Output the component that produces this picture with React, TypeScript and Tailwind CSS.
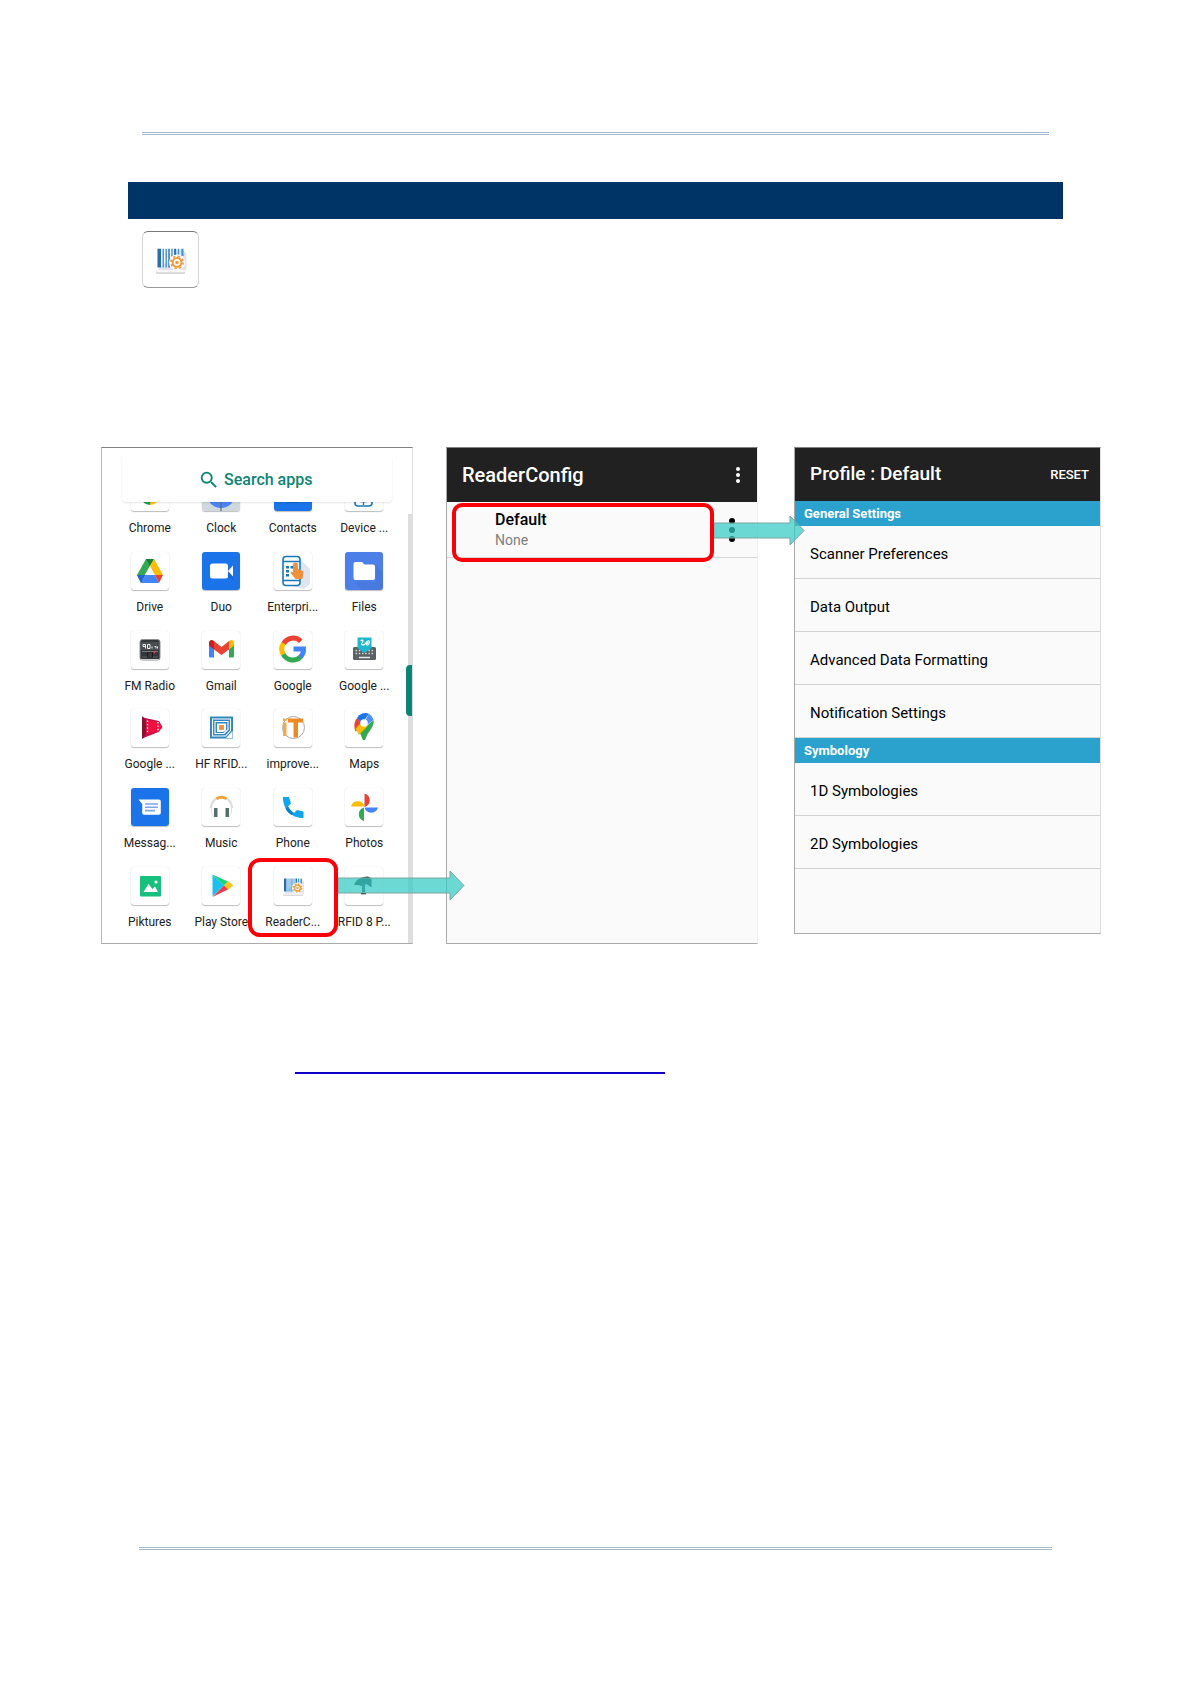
import type { ReactNode } from "react";
import { MdSearch } from "react-icons/md";

const BLUE = "#1a73e8";

function Barcode() {
  return (
    <g transform="translate(0 1.5)">
      <path d="M10 25 L30 25 L30 13 L26 10 Z" fill="#dfe3f1" />
      <path d="M9 26h20v1.500H9z" fill="#dcdcdf" />
      <path d="M10 10h2.500v13H10zM17.500 10h1v13h-1zM21.500 10h1.500v6h-1.500z" fill="#2a6eb0" />
      <path d="M13.500 10h1v13h-1zM15.500 10h1v13h-1zM19.500 10h1v13h-1zM24 10h1v4h-1zM26.500 10h1.500v5h-1.500z" fill="#3a9ad0" />
      <circle cx="23.500" cy="19.500" r="5.500" fill="#fff" />
      <circle cx="23.500" cy="19.500" r="3" fill="none" stroke="#f19a3e" strokeWidth="1.400" />
      <circle cx="23.500" cy="19.500" r="4.200" fill="none" stroke="#f19a3e" strokeWidth="1.200" strokeDasharray="1.650 1.650" />
      <circle cx="23.500" cy="19.500" r="1.200" fill="#f19a3e" />
    </g>
  );
}

const icons: Record<string, ReactNode> = {
  chrome: (
    <>
      <path d="M9 24a12 12 0 0 0 10 8l3-7z" fill="#1e9e50" />
      <path d="M19 32a12 12 0 0 0 10-8l-9 1z" fill="#fbc116" />
    </>
  ),
  clock: (
    <>
      <rect width="38" height="38" fill="#cfd8dc" />
      <circle cx="19" cy="21" r="14" fill="#4d84f3" />
      <path d="M19 21v17" stroke="#546e7a" strokeWidth="1.2" />
    </>
  ),
  contacts: (
    <>
      <rect width="38" height="38" fill={BLUE} />
      <path d="M13 25h12v5H13z" fill="#1765cc" />
    </>
  ),
  device: (
    <>
      <rect x="10" y="8" width="17" height="25" rx="3" fill="none" stroke="#1b78b8" strokeWidth="1.6" />
      <path d="M18.500 26v6M15 28.500h7" stroke="#1b78b8" strokeWidth="1.4" />
    </>
  ),
  drive: (
    <>
      <path d="M15 7h8L14 22.5 10 31 6 23z" fill="#34a853" />
      <path d="M15 7h8l-4 7z" fill="#188038" />
      <path d="M23 7l9 16h-8l-5-9z" fill="#fbbc04" />
      <path d="M14.5 23H24l4 8H10z" fill="#4285f4" />
      <path d="M6 23h8.5L10 31z" fill="#2564d3" />
      <path d="M24 23h8l-4 8z" fill="#ea4335" />
    </>
  ),
  duo: (
    <>
      <rect width="38" height="38" fill={BLUE} />
      <path d="M9 15h18l4-3v14l-4-3H9z" fill="#1558c0" opacity=".45" transform="translate(0 2)" />
      <rect x="8" y="11.500" width="18" height="15" rx="2.500" fill="#fff" />
      <path d="M26 19l5-5.500v11z" fill="#fff" />
    </>
  ),
  enterprise: (
    <>
      <path d="M26 7l10 10v15l-6 5-16-4z" fill="#e0e4ef" />
      <rect x="9" y="4.500" width="17" height="29" rx="3" fill="#fff" stroke="#1b78b8" strokeWidth="1.600" />
      <path d="M9 9.500h17M9 28.500h17" stroke="#1b78b8" strokeWidth="1.300" />
      <path d="M12 14h3v2.500h-3zM16.500 14h3v2.500h-3zM12 18h3v2.500h-3zM12 22h3v2.500h-3z" fill="#1b78b8" />
      <path d="M19 13a2.500 2.500 0 0 1 5 0v4l4 1.500a2 2 0 0 1 1.500 2l-1 6.500h-7l-5-6c0-1.500 1.500-1.500 2.500-.5z" fill="#f2913d" />
    </>
  ),
  files: (
    <>
      <rect width="38" height="38" fill="#4c80e8" />
      <path d="M9 30l22 0V14l7 7v17H17z" fill="#4172d4" opacity=".5" />
      <path d="M8.500 12a2 2 0 0 1 2-2H17l2.500 2.500H28a2 2 0 0 1 2 2V26a2 2 0 0 1-2 2H10.500a2 2 0 0 1-2-2z" fill="#fff" />
    </>
  ),
  radio: (
    <>
      <rect x="9" y="8.500" width="20" height="20.500" rx="2.500" fill="#34373a" stroke="#8d8f91" strokeWidth="1" />
      <rect x="10" y="11" width="18" height="8" fill="#4a4d50" />
      <path d="M14.500 17.500v-4h-2.500v2h2.500M16.500 13.500H19v4h-2.500zM21 17.500v-2M23.500 15.500h1.500v2M26.500 17.500v-2" fill="none" stroke="#eee" strokeWidth="1" />
      <path d="M11 20.500h16" stroke="#8a8a8a" strokeWidth=".8" />
      <path d="M11 26h16" stroke="#666" strokeWidth=".8" />
      <rect x="16" y="21.500" width="6" height="5" fill="#191a1b" />
      <path d="M18 22v4M20 22v4" stroke="#777" strokeWidth=".7" />
      <circle cx="23.500" cy="21.500" r="1" fill="#e53950" />
      <path d="M10 28.500h18" stroke="#ccc" />
    </>
  ),
  gmail: (
    <g transform="translate(0 -1.5)">
      <path d="M7 12v14.500a1.500 1.500 0 0 0 1.500 1.500H12V16z" fill="#4285f4" />
      <path d="M32 12v14.500a1.500 1.500 0 0 1-1.500 1.500H27V16z" fill="#34a853" />
      <path d="M27 11.500c2-1.700 5-1 5 1.500v3L27 20z" fill="#fbbc04" />
      <path d="M7 13c0-2.500 3-3.200 5-1.500V20l-5-4z" fill="#c5221f" />
      <path d="M12 11.500l7.500 6 7.500-6V20l-7.500 5.500L12 20z" fill="#ea4335" />
    </g>
  ),
  google: (
    <g fill="none" strokeWidth="5">
      <path d="M26.800 10.200A11 11 0 0 0 9.500 12.800" stroke="#ea4335" />
      <path d="M9.500 12.200A11 11 0 0 0 9.500 23.800" stroke="#fbbc05" />
      <path d="M9.300 23.400A11 11 0 0 0 26.500 26" stroke="#34a853" />
      <path d="M26.200 26.200A10.500 10.500 0 0 0 29.500 18H19.500" stroke="#4285f4" />
    </g>
  ),
  keyboard: (
    <>
      <rect x="8" y="16" width="23" height="13" rx="1.500" fill="#5b6063" />
      <path d="M10.500 19.500h18M10.500 22.500h18" stroke="#cfd3d5" strokeWidth="1.600" strokeDasharray="1.600 1.600" />
      <path d="M14 26.500h11" stroke="#e6e8e9" strokeWidth="1.500" />
      <path d="M12.500 6.500h14v10.500l-7 5-7-5z" fill="#1fb6cf" />
      <path d="M15.500 9.500c3-1 3 1 1.500 2.500s1 3 3 1 2.500-4 4-3-.5 4.500-2 4 .5-3 1.500-2" fill="none" stroke="#fff" strokeWidth="1.200" />
    </>
  ),
  movies: (
    <>
      <path d="M11 7.500q1 0 2 1.200L28 12l3.500 6-4 5-14.500 5.800q-1 1-2 1z" fill="#c2134a" />
      <path d="M14.500 11l13 1.500 3.500 6-3.500 4-13 2.500z" fill="#f0103f" />
      <path d="M11 7.500q4.500 2 4.500 11T11 29.800z" fill="#8a1233" />
      <path d="M16.500 11.500v13M27 13v9.500" stroke="#fff" strokeWidth="1.400" strokeDasharray="1.400 2" />
    </>
  ),
  hfrfid: (
    <g transform="translate(0 1.5)">
      <rect x="8" y="6" width="23" height="22" fill="#3386bd" />
      <g fill="none" stroke="#fff" strokeWidth="1.100">
        <path d="M10.500 8.500h18V20l-5 5.500h-13z" />
        <path d="M13 11h13v8l-4 4h-9z" />
        <path d="M15.500 13.500h8v5l-2.500 2.500h-5.500z" />
      </g>
      <rect x="15.500" y="13.500" width="8" height="7.500" fill="#fff" />
      <path d="M24 27.500l6.500-7v7z" fill="#fff" />
      <rect x="17" y="14.500" width="5" height="5" rx="1" fill="#f2913d" />
    </g>
  ),
  improve: (
    <g transform="translate(0 1.5)">
      <circle cx="19.500" cy="17" r="11" fill="#fff" stroke="#9aa0a6" strokeWidth=".900" />
      <path d="M9 12h3.500v13.500H9zM9 8h3.500v2.500H9z" fill="#f5a94e" />
      <path d="M14 8h15v4h-5v15h-4.500V12H14z" fill="#ef8a22" />
    </g>
  ),
  maps: (
    <g transform="translate(0 1.5)">
      <path d="M12 7.500L19 14l-8.500 7C9 17 8.500 12 12 7.500z" fill="#ea4335" />
      <path d="M12 7.500a9.500 9.500 0 0 1 12-4.300L17 13z" fill="#1a73e8" />
      <path d="M24 3.200a9.500 9.500 0 0 1 4.500 6L15 20z" fill="#4d90f5" />
      <path d="M28.500 9.200c1 6-3 10-6 14.500-1.500 2.300-1.500 6-3.500 6s-2-3.700-3.500-6l-1-1.500z" fill="#34a853" />
      <path d="M10.500 18l6-6 6.500 3-9 9.500z" fill="#fbbc04" />
      <circle cx="19" cy="12.500" r="3.800" fill="#fff" />
    </g>
  ),
  messages: (
    <>
      <rect width="38" height="38" fill={BLUE} />
      <path d="M7.500 11.500H28a1.800 1.800 0 0 1 1.800 1.800V25a1.800 1.800 0 0 1-1.800 1.800H13A1.800 1.800 0 0 1 11.200 25V16z" fill="#fff" />
      <path d="M14 16h13M14 19.300h13M14 22.600h10" stroke="#7ba7ee" strokeWidth="1.600" />
    </>
  ),
  music: (
    <>
      <path d="M9 20a10 10.500 0 0 1 21 0" fill="none" stroke="#dcdcdc" strokeWidth="2" />
      <path d="M14.500 10.800a10 10 0 0 1 10 0" fill="none" stroke="#f2a43a" strokeWidth="3" />
      <path d="M12 20h3.500v9H12zM23.500 20H27v9h-3.500z" fill="#546e6a" />
      <path d="M9.500 20c-.5 4 .5 7 2.500 9M29.500 20c.5 4-.5 7-2.500 9" fill="none" stroke="#e0e0e0" />
    </>
  ),
  phone: (
    <>
      <path d="M9 9h6l2 6.500-3 3c1.500 3 3.500 5 6 6.500l3-3 6.500 1.500V30C18 30.500 8.500 21 9 9z" fill="#12a4ee" />
      <path d="M14 18.500c1.500 3 3.500 5 6 6.500l-2.500 2c-3-2-5-4-6-6.500z" fill="#0b7fd0" />
    </>
  ),
  photos: (
    <>
      <path d="M19.500 5.500a7 7 0 0 1 0 13.500z" fill="#ea4335" />
      <path d="M33 19.500a7 7 0 0 1-13.500 0z" fill="#4285f4" />
      <path d="M19 33a7 7 0 0 1 0-13.500z" fill="#34a853" />
      <path d="M6 18.500a7 7 0 0 1 13.500 0z" fill="#fbbc04" />
    </>
  ),
  piktures: (
    <>
      <rect x="9" y="9" width="21" height="20.500" rx="1" fill="#18c07d" />
      <path d="M12.500 25l5-8 4 5 2.500-2.500 3 5.500z" fill="#fff" />
      <circle cx="25" cy="15" r="1.600" fill="#fff" />
    </>
  ),
  play: (
    <>
      <path d="M10.500 7.500v22L22 18.500z" fill="#19c0f0" />
      <path d="M10.500 7.500L22 18.500l4-4z" fill="#18d47a" />
      <path d="M26 14.300l5.500 4.200-5.500 4-4-4z" fill="#fcc419" />
      <path d="M10.500 30L22 18.500l4 4z" fill="#ee3a4c" />
    </>
  ),
  reader: <Barcode />,
  rfid: (
    <>
      <path d="M9 18c2-6 7-8 14-8.500l3.500 2v9l-5-3.500-5 2-3-1z" fill="#2c3e46" />
      <path d="M18.500 17v8" stroke="#3f5560" strokeWidth="3" />
      <path d="M16 26.500h5" stroke="#111" strokeWidth="1.500" />
    </>
  ),
};

const apps = [
  { icon: "chrome", name: "Chrome" },
  { icon: "clock", name: "Clock" },
  { icon: "contacts", name: "Contacts" },
  { icon: "device", name: "Device ..." },
  { icon: "drive", name: "Drive" },
  { icon: "duo", name: "Duo" },
  { icon: "enterprise", name: "Enterpri..." },
  { icon: "files", name: "Files" },
  { icon: "radio", name: "FM Radio" },
  { icon: "gmail", name: "Gmail" },
  { icon: "google", name: "Google" },
  { icon: "keyboard", name: "Google ..." },
  { icon: "movies", name: "Google ..." },
  { icon: "hfrfid", name: "HF RFID..." },
  { icon: "improve", name: "improve..." },
  { icon: "maps", name: "Maps" },
  { icon: "messages", name: "Messag..." },
  { icon: "music", name: "Music" },
  { icon: "phone", name: "Phone" },
  { icon: "photos", name: "Photos" },
  { icon: "piktures", name: "Piktures" },
  { icon: "play", name: "Play Store" },
  { icon: "reader", name: "ReaderC...", marked: true },
  { icon: "rfid", name: "RFID 8 P..." },
];

export default function App() {
  return (
    <div className="flex min-h-screen flex-col bg-white font-['Roboto',sans-serif] text-[#212121]">
      <header className="mx-[142px] mt-[132px] h-[3px] border-y border-[#a5bad0]" />
      <main className="flex-1">
        <div className="mx-32 mt-[47px] h-[37px] bg-[#003366]" />
        <div className="ml-[142px] mt-3 size-[57px] rounded-md border border-x-[#d5d5d5] border-t-[#777] border-b-[#999]">
          <svg viewBox="0 0 38 38" className="size-full">
            <Barcode />
          </svg>
        </div>
        <div className="ml-[101px] mr-[90px] mt-[159px] grid grid-cols-[312fr_312fr_310fr] items-start gap-[33px]">
          <Launcher />
          <ReaderConfig />
          <Profile />
        </div>
        <a href="#reader-config" aria-label="ReaderConfig" className="ml-[295px] mt-[110px] block h-5 w-[370px] border-b-2 border-[#0f00c8]" />
      </main>
      <footer className="mx-[139px] mb-[133px] h-[3px] border-y border-[#a3b8c6]" />
    </div>
  );
}

function Launcher() {
  return (
    <section className="relative z-20 border border-l-[#bbb] border-t-[#808080] border-r-[#ddd] border-b-[#aaa] pt-[7px] pb-3">
      <label className="relative z-10 mx-5 flex h-[47px] items-center justify-center gap-1 rounded-sm bg-white pt-0.5 text-[#0b8573] shadow-[0_1px_2px_rgba(0,0,0,0.1)]">
        <MdSearch className="size-[22px]" />
        <input
          type="text"
          placeholder="Search apps"
          aria-label="Search apps"
          className="w-[92px] text-base font-medium outline-none placeholder:text-[#0b8573] placeholder:opacity-100"
        />
      </label>
      <div className="-mt-[29px] grid h-[458px] grid-cols-4 content-between px-3">
        {apps.map((app) => (
          <AppTile key={app.icon} icon={icons[app.icon]} name={app.name} marked={app.marked} />
        ))}
      </div>
      <div className="absolute right-0 top-[66px] bottom-0 w-1 bg-[#dedede]" />
      <div className="absolute right-0 top-[217px] h-[51px] w-[6px] rounded-l-sm bg-[#0b8573]" />
    </section>
  );
}

function AppTile({ icon, name, marked }: { icon: ReactNode; name: string; marked?: boolean }) {
  return (
    <button type="button" className={marked ? "relative z-10 flex flex-col items-center gap-2" : "flex flex-col items-center gap-2"}>
      <span className="size-[38px] overflow-hidden rounded-[3px] bg-white shadow-[0_1px_1px_rgba(0,0,0,0.25),0_0_1px_rgba(0,0,0,0.15)]">
        <svg viewBox="0 0 38 38" className="size-full">
          {icon}
        </svg>
      </span>
      <span className="text-xs leading-[18px] whitespace-nowrap">{name}</span>
      {marked && (
        <span className="absolute -inset-x-[9px] -top-[9px] -bottom-[6px] rounded-xl border-4 border-[#fb0007]">
          <Arrow width={127} className="absolute left-[calc(100%+4px)] top-2" />
        </span>
      )}
    </button>
  );
}

function Arrow({ width, className }: { width: number; className: string }) {
  const neck = width - 15;
  return (
    <svg width={width} height="31" viewBox={`0 0 ${width} 31`} className={`max-w-none ${className}`}>
      <path d={`M0 8H${neck}V1L${width - 1} 15.500 ${neck} 30V23H0Z`} fill="#33cbc4" fillOpacity=".72" stroke="#7fa3a2" strokeWidth="1" />
    </svg>
  );
}

function Dots({ className }: { className: string }) {
  return (
    <svg viewBox="0 0 6 24" fill="currentColor" className={className}>
      <circle cx="3" cy="3" r="3" />
      <circle cx="3" cy="12" r="3" />
      <circle cx="3" cy="21" r="3" />
    </svg>
  );
}

function ReaderConfig() {
  return (
    <section className="relative z-10 self-stretch border border-l-[#aaa] border-t-[#808080] border-r-[#f0f0f0] border-b-[#aaa] bg-[#fafafa]">
      <div className="flex h-[54px] items-center justify-between bg-[#212121] pl-[15px] pr-[17px] text-white">
        <h2 className="text-xl font-medium">ReaderConfig</h2>
        <button type="button" aria-label="More options">
          <Dots className="h-4 w-1" />
        </button>
      </div>
      <div className="relative flex h-14 items-center justify-between border-b border-[#d5d5d5] pl-12 pr-[22px]">
        <div>
          <p className="text-base leading-5 font-medium text-black">Default</p>
          <p className="text-sm leading-5 text-[#808080]">None</p>
        </div>
        <button type="button" aria-label="Profile options" className="text-black">
          <Dots className="h-6 w-[6px]" />
        </button>
        <span className="absolute left-[5px] right-[43px] top-px -bottom-[5px] rounded-[10px] border-4 border-[#fb0007]">
          <Arrow width={91} className="absolute left-[calc(100%+4px)] top-2" />
        </span>
      </div>
    </section>
  );
}

function Profile() {
  return (
    <section className="ml-[3px] border border-l-[#aaa] border-t-[#808080] border-r-[#ddd] border-b-[#aaa] bg-[#fafafa] pb-16">
      <div className="flex h-[53px] items-center justify-between bg-[#212121] pl-[15px] pr-[11px] text-white">
        <h2 className="text-[19px] font-medium">Profile : Default</h2>
        <button type="button" className="text-[13px] font-medium">RESET</button>
      </div>
      <Group title="General Settings" items={["Scanner Preferences", "Data Output", "Advanced Data Formatting", "Notification Settings"]} />
      <Group title="Symbology" items={["1D Symbologies", "2D Symbologies"]} />
    </section>
  );
}

function Group({ title, items }: { title: string; items: string[] }) {
  return (
    <>
      <h3 className="bg-[#2ba2cd] pl-[9px] text-[13px] leading-[25px] font-bold text-white">{title}</h3>
      <ul>
        {items.map((item) => (
          <li key={item} className="border-b border-[#d3d3d3]">
            <button type="button" className="flex h-[52px] w-full items-center pl-[15px] pt-1 text-[15px] text-black">
              {item}
            </button>
          </li>
        ))}
      </ul>
    </>
  );
}
